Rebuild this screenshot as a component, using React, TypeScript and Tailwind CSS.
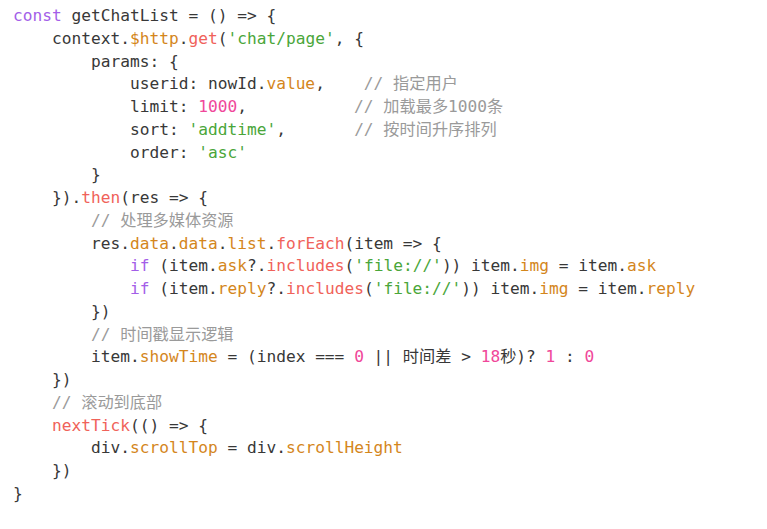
import React from "react";

type Tok = [string, string?];

const K = "text-[#a35ee8]"; // keyword
const P = "text-[#d4861c]"; // property
const F = "text-[#f0625a]"; // function
const S = "text-[#4aa63a]"; // string
const N = "text-[#f0479a]"; // number
const C = "text-[#9a9a9a]"; // comment

const lines: Tok[][] = [
  [["const", K], [" getChatList = () => {"]],
  [["    context."], ["$http", P], ["."], ["get", F], ["("], ["'chat/page'", S], [", {"]],
  [["        params: {"]],
  [["            userid: nowId."], ["value", P], [",    "], ["// 指定用户", C]],
  [["            limit: "], ["1000", N], [",           "], ["// 加载最多1000条", C]],
  [["            sort: "], ["'addtime'", S], [",       "], ["// 按时间升序排列", C]],
  [["            order: "], ["'asc'", S]],
  [["        }"]],
  [["    })."], ["then", F], ["(res => {"]],
  [["        "], ["// 处理多媒体资源", C]],
  [["        res."], ["data", P], ["."], ["data", P], ["."], ["list", P], ["."], ["forEach", F], ["(item => {"]],
  [["            "], ["if", K], [" (item."], ["ask", P], ["?."], ["includes", F], ["("], ["'file://'", S], [")) item."], ["img", P], [" = item."], ["ask", P]],
  [["            "], ["if", K], [" (item."], ["reply", P], ["?."], ["includes", F], ["("], ["'file://'", S], [")) item."], ["img", P], [" = item."], ["reply", P]],
  [["        })"]],
  [["        "], ["// 时间戳显示逻辑", C]],
  [["        item."], ["showTime", P], [" = (index === "], ["0", N], [" || 时间差 > "], ["18", N], ["秒)? "], ["1", N], [" : "], ["0", N]],
  [["    })"]],
  [["    "], ["// 滚动到底部", C]],
  [["    "], ["nextTick", F], ["(() => {"]],
  [["        div."], ["scrollTop", P], [" = div."], ["scrollHeight", P]],
  [["    })"]],
  [["}"]],
];

export default function App() {
  return (
    <div className="w-[767px] h-[529px] bg-white overflow-hidden">
      <div
        className="pt-[5px] pl-[13px] text-[16.2px] leading-[22.75px] text-[#383838]"
        style={{ fontFamily: '"DejaVu Sans Mono", "Noto Sans CJK SC", monospace' }}
      >
        {lines.map((l, i) => (
          <div key={i} className="whitespace-pre h-[22.75px]">
            {l.map(([t, c], j) => (
              <span key={j} className={c}>
                {t}
              </span>
            ))}
          </div>
        ))}
      </div>
    </div>
  );
}
